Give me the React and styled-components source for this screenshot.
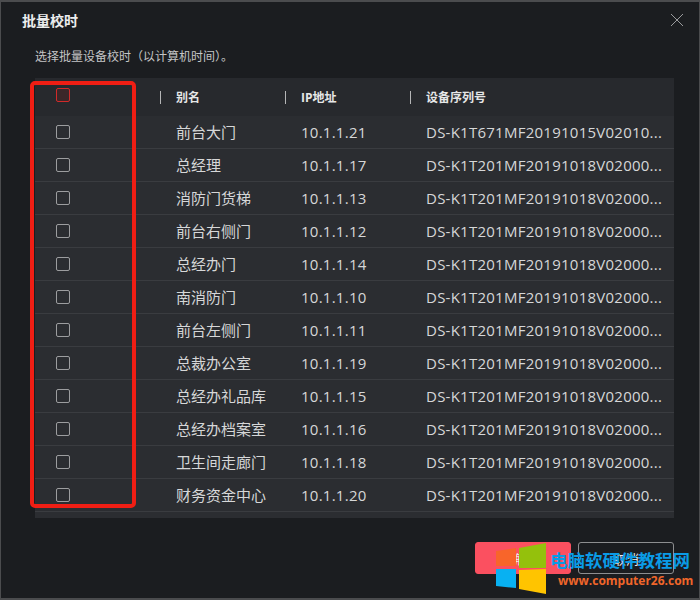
import React from "react";
import styled, { createGlobalStyle } from "styled-components";

const GlobalStyle = createGlobalStyle`
  html, body {
    margin: 0;
    padding: 0;
    background: #1b1d20;
  }
  * {
    box-sizing: border-box;
  }
`;

const Dialog = styled.div`
  position: relative;
  width: 700px;
  height: 600px;
  overflow: hidden;
  display: flex;
  flex-direction: column;
  background: #1b1d20;
  border: 1px solid #4b4c4e;
  border-bottom-width: 2px;
  border-top-width: 2px;
  color: #d6d7d8;
  font-family: "Open Sans", "Noto Sans CJK SC", sans-serif;
`;

const TitleBar = styled.div`
  display: flex;
  align-items: center;
  justify-content: space-between;
  height: 38px;
  padding: 0 15px 2px 21px;
`;

const Title = styled.h1`
  margin: 0;
  font-size: 14px;
  font-weight: 700;
  color: #eceded;
`;

const CloseButton = styled.button`
  display: flex;
  padding: 0;
  border: none;
  background: none;
  color: #9a9b9d;
`;

const Hint = styled.p`
  margin: 0;
  padding: 8px 0 0 34px;
  height: 38px;
  font-size: 12px;
  line-height: 18px;
  color: #c4c5c6;
`;

const Table = styled.div`
  margin-left: 34px;
  width: 639px;
  height: 440px;
  background: #2b2d31;
`;

const Row = styled.div`
  display: grid;
  grid-template-columns: 125px 125px 125px 264px;
  align-items: center;
  height: 33px;
  border-bottom: 1px solid #3a3c40;
`;

const HeaderRow = styled(Row)`
  height: 38px;
  background: #27292d;
  border-bottom: none;
`;

const CheckCell = styled.div`
  display: flex;
  padding-left: 21px;
`;

const HeaderCheckCell = styled(CheckCell)`
  margin-bottom: 4px;
`;

const Checkbox = styled.span`
  display: block;
  width: 14px;
  height: 14px;
  border: 1px solid ${(props) => (props.$red ? "#d12a2a" : "#9c9d9f")};
  border-radius: 2px;
  background: ${(props) => (props.$red ? "#3a2729" : "transparent")};
`;

const HeaderCell = styled.div`
  padding-left: 15px;
  border-left: 1px solid #b5b6b7;
  font-size: 12px;
  font-weight: 700;
  line-height: 13px;
  color: #e6e7e7;
`;

const Cell = styled.div`
  padding-left: 16px;
  padding-bottom: ${(props) => (props.$latin ? "0" : "2px")};
  font-size: 15px;
  letter-spacing: ${(props) => (props.$latin ? "0.25px" : "0")};
  color: #d6d7d8;
  white-space: nowrap;
`;

const Footer = styled.div`
  display: flex;
  justify-content: flex-end;
  gap: 7px;
  padding: 24px 25px 0 0;
`;

const Button = styled.button`
  width: 96px;
  height: 32px;
  border-radius: 3px;
  border: 1px solid ${(props) => (props.$primary ? "#fb5060" : "#8d8e90")};
  background: ${(props) => (props.$primary ? "#fb5060" : "transparent")};
  color: #eceded;
  font-family: inherit;
  font-size: 13px;
`;

const RedMark = styled.div`
  position: absolute;
  left: 29px;
  top: 79px;
  width: 106px;
  height: 427px;
  border: 4px solid #f01e14;
  border-radius: 5px;
`;

const Watermark = styled.div`
  position: absolute;
  left: 495px;
  top: 541px;
  display: flex;
  align-items: flex-start;
`;

const WatermarkText = styled.div`
  display: flex;
  flex-direction: column;
  align-items: flex-start;
  margin: 5px 0 0 4px;
`;

const SiteName = styled.div`
  font-size: 17.5px;
  font-weight: 700;
  line-height: 24px;
  color: #0a9be6;
  white-space: nowrap;
`;

const SiteUrl = styled.div`
  margin: 1px 0 0 8px;
  font-size: 12px;
  font-weight: 700;
  line-height: 15px;
  color: #f0662a;
  white-space: nowrap;
`;

const devices = [
  ["前台大门", "10.1.1.21", "DS-K1T671MF20191015V02010..."],
  ["总经理", "10.1.1.17", "DS-K1T201MF20191018V02000..."],
  ["消防门货梯", "10.1.1.13", "DS-K1T201MF20191018V02000..."],
  ["前台右侧门", "10.1.1.12", "DS-K1T201MF20191018V02000..."],
  ["总经办门", "10.1.1.14", "DS-K1T201MF20191018V02000..."],
  ["南消防门", "10.1.1.10", "DS-K1T201MF20191018V02000..."],
  ["前台左侧门", "10.1.1.11", "DS-K1T201MF20191018V02000..."],
  ["总裁办公室", "10.1.1.19", "DS-K1T201MF20191018V02000..."],
  ["总经办礼品库", "10.1.1.15", "DS-K1T201MF20191018V02000..."],
  ["总经办档案室", "10.1.1.16", "DS-K1T201MF20191018V02000..."],
  ["卫生间走廊门", "10.1.1.18", "DS-K1T201MF20191018V02000..."],
  ["财务资金中心", "10.1.1.20", "DS-K1T201MF20191018V02000..."],
];

function WindowsLogo() {
  return (
    <svg width="50" height="51" viewBox="0 0 50 51">
      <path d="M0 8 L20 5 L20 23 L0 23 Z" fill="#f8652a" />
      <path d="M23 5 L50 0 L50 25 L23 25 Z" fill="#94c10c" />
      <path d="M0 26 L20 26 L20 45 L0 43 Z" fill="#08b1f2" />
      <path d="M23 27 L50 26 L50 51 L23 46 Z" fill="#ffc400" />
    </svg>
  );
}

export default function App() {
  return (
    <Dialog>
      <GlobalStyle />
      <TitleBar>
        <Title>批量校时</Title>
        <CloseButton>
          <svg width="14" height="14" viewBox="0 0 14 14">
            <path d="M1 1 L13 13 M13 1 L1 13" stroke="currentColor" fill="none" />
          </svg>
        </CloseButton>
      </TitleBar>
      <Hint>选择批量设备校时（以计算机时间）。</Hint>
      <Table>
        <HeaderRow>
          <HeaderCheckCell>
            <Checkbox $red />
          </HeaderCheckCell>
          <HeaderCell>别名</HeaderCell>
          <HeaderCell>IP地址</HeaderCell>
          <HeaderCell>设备序列号</HeaderCell>
        </HeaderRow>
        {devices.map((device) => (
          <Row key={device[1]}>
            <CheckCell>
              <Checkbox />
            </CheckCell>
            <Cell>{device[0]}</Cell>
            <Cell $latin>{device[1]}</Cell>
            <Cell $latin>{device[2]}</Cell>
          </Row>
        ))}
      </Table>
      <Footer>
        <Button $primary>确定</Button>
        <Button>取消</Button>
      </Footer>
      <RedMark />
      <Watermark>
        <WindowsLogo />
        <WatermarkText>
          <SiteName>电脑软硬件教程网</SiteName>
          <SiteUrl>www.computer26.com</SiteUrl>
        </WatermarkText>
      </Watermark>
    </Dialog>
  );
}
